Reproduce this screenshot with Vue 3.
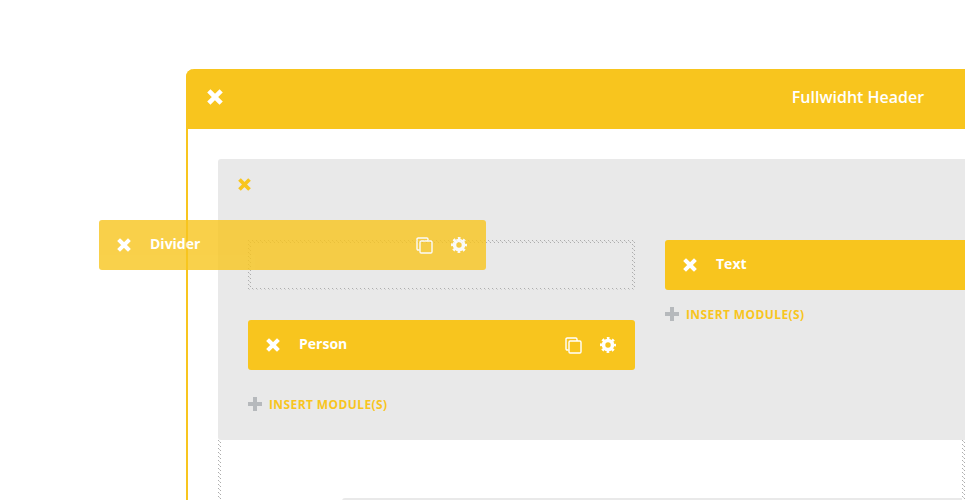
<template>
  <div class="stage">
    <section class="section">
      <header class="section__head">
        <svg class="icon-x icon-x--lg" viewBox="0 0 14 14"><path d="M3 3l8 8M11 3l-8 8" /></svg>
        <h1 class="section__title">Fullwidht Header</h1>
      </header>
      <div class="section__body">
        <div class="row">
          <svg class="icon-x icon-x--row" viewBox="0 0 14 14"><path d="M3 3l8 8M11 3l-8 8" /></svg>
          <div class="columns">
            <div class="column">
              <div class="placeholder"></div>
              <div class="module">
                <svg class="icon-x" viewBox="0 0 14 14"><path d="M3 3l8 8M11 3l-8 8" /></svg>
                <span class="module__name">Person</span>
                <svg class="icon-copy" viewBox="0 0 17 17"><path d="M3.5 13H2.2C1.5 13 1 12.500 1 11.800V2.200C1 1.500 1.500 1 2.200 1h8.600c.7 0 1.200.5 1.200 1.200V4" /><rect x="4" y="4" width="12" height="12" rx="1.200" /></svg>
                <svg class="icon-gear" viewBox="0 0 16 16"><circle class="icon-gear__ring" cx="8" cy="8" r="4.500" /><circle class="icon-gear__teeth" cx="8" cy="8" r="6.800" /></svg>
              </div>
              <a class="insert insert--left">
                <svg class="icon-plus" viewBox="0 0 14 14"><path d="M7 0v14M0 7h14" /></svg>
                INSERT MODULE(S)
              </a>
            </div>
            <div class="column">
              <div class="module">
                <svg class="icon-x" viewBox="0 0 14 14"><path d="M3 3l8 8M11 3l-8 8" /></svg>
                <span class="module__name">Text</span>
              </div>
              <a class="insert">
                <svg class="icon-plus" viewBox="0 0 14 14"><path d="M7 0v14M0 7h14" /></svg>
                INSERT MODULE(S)
              </a>
            </div>
          </div>
        </div>
        <div class="dropzone">
          <div class="dropzone__next"></div>
        </div>
      </div>
    </section>

    <div class="module module--dragging">
      <svg class="icon-x" viewBox="0 0 14 14"><path d="M3 3l8 8M11 3l-8 8" /></svg>
      <span class="module__name">Divider</span>
      <svg class="icon-copy" viewBox="0 0 17 17"><path d="M3.5 13H2.2C1.5 13 1 12.500 1 11.800V2.200C1 1.500 1.500 1 2.200 1h8.600c.7 0 1.200.5 1.200 1.200V4" /><rect x="4" y="4" width="12" height="12" rx="1.200" /></svg>
      <svg class="icon-gear" viewBox="0 0 16 16"><circle class="icon-gear__ring" cx="8" cy="8" r="4.500" /><circle class="icon-gear__teeth" cx="8" cy="8" r="6.800" /></svg>
    </div>
  </div>
</template>

<script setup>
</script>

<style>
html,
body {
  margin: 0;
  background: #fff;
}
</style>

<style scoped>
.stage {
  position: relative;
  width: 965px;
  height: 500px;
  padding: 69px 0 0 186px;
  box-sizing: border-box;
  overflow: hidden;
  background: #fff;
  font-family: "Open Sans", sans-serif;
}

.section {
  width: 1344px;
  box-sizing: border-box;
  border-left: 2px solid #f8c51e;
  border-top-left-radius: 8px;
}

.section__head {
  display: flex;
  align-items: center;
  height: 60px;
  margin-left: -2px;
  padding-left: 21px;
  position: relative;
  background: #f8c51e;
  border-radius: 8px 0 0 0;
}

.section__title {
  position: absolute;
  left: 0;
  right: 0;
  top: 0;
  margin: 0;
  text-align: center;
  font-size: 16px;
  font-weight: 600;
  line-height: 56px;
  color: #fff;
}

.section__body {
  padding: 30px 30px 0;
}

.row {
  position: relative;
  z-index: 1;
  height: 281px;
  padding: 0 30px;
  box-sizing: border-box;
  background: #e9e9e9;
  border-radius: 3px 0 0 3px;
}

.icon-x {
  flex: none;
  width: 14px;
  height: 14px;
  fill: none;
  stroke: #fff;
  stroke-width: 4;
  stroke-linecap: square;
}

.icon-x--lg {
  width: 16px;
  height: 16px;
  margin-top: -4px;
}

.icon-x--row {
  position: absolute;
  left: 20px;
  top: 19px;
  width: 13px;
  height: 13px;
  stroke: #f8c51e;
}

.columns {
  display: flex;
  gap: 30px;
  padding-top: 81px;
}

.column {
  flex: none;
  width: 387px;
}

/* diagonal hatch: a 3px dash, fainter in the middle, every 4px */
.placeholder,
.dropzone {
  --dot: conic-gradient(from 0deg at 1px 1px, transparent 75%, #adadad 0);
  --dot-soft: conic-gradient(from 0deg at 1px 1px, transparent 75%, #cfcfcf 0);
  box-sizing: border-box;
  border: 3px solid transparent;
  background-image:
    linear-gradient(var(--fill), var(--fill)),
    var(--dot),
    var(--dot-soft),
    var(--dot);
  background-size: auto, 4px 4px, 4px 4px, 4px 4px;
  background-position: 0 0, 0 0, 1px 1px, 2px 2px;
  background-origin: padding-box, border-box, border-box, border-box;
  background-clip: padding-box, border-box, border-box, border-box;
}

.placeholder {
  --fill: #e9e9e9;
  height: 50px;
  margin-bottom: 30px;
}

.module {
  display: flex;
  align-items: center;
  height: 50px;
  padding: 0 19px 0 18px;
  box-sizing: border-box;
  background: #f8c51e;
  border-radius: 3px;
  color: #fff;
}

.module--dragging {
  position: absolute;
  z-index: 2;
  left: 99px;
  top: 220px;
  width: 387px;
  opacity: 0.8;
}

.module__name {
  flex: 1;
  margin-left: 19px;
  margin-top: -4px;
  font-size: 14px;
  font-weight: 700;
}

.icon-copy {
  flex: none;
  width: 17px;
  height: 17px;
  margin-right: 18px;
  fill: none;
  stroke: #fff;
  stroke-width: 1.400;
}

.icon-gear {
  flex: none;
  width: 16px;
  height: 16px;
  fill: none;
  stroke: #fff;
}

.icon-gear__ring {
  stroke-width: 3.600;
}

.icon-gear__teeth {
  stroke-width: 2.400;
  stroke-dasharray: 2.670;
  stroke-dashoffset: 1.330;
}

.insert {
  display: flex;
  align-items: center;
  height: 20px;
  margin-top: 14px;
  gap: 7px;
  font-size: 12px;
  font-weight: 700;
  letter-spacing: 0.4px;
  color: #f8c51e;
}

.insert--left {
  margin-top: 24px;
}

.icon-plus {
  flex: none;
  width: 14px;
  height: 14px;
  fill: none;
  stroke: #b6b9bc;
  stroke-width: 4;
}

.dropzone {
  --fill: #fff;
  position: relative;
  width: 747px;
  height: 100px;
  margin-top: -4px;
  padding-top: 62px;
  border-top: 0;
}

.dropzone__next {
  height: 30px;
  margin-left: 121px;
  background: #e9e9e9;
  border-radius: 3px 0 0 0;
}
</style>
